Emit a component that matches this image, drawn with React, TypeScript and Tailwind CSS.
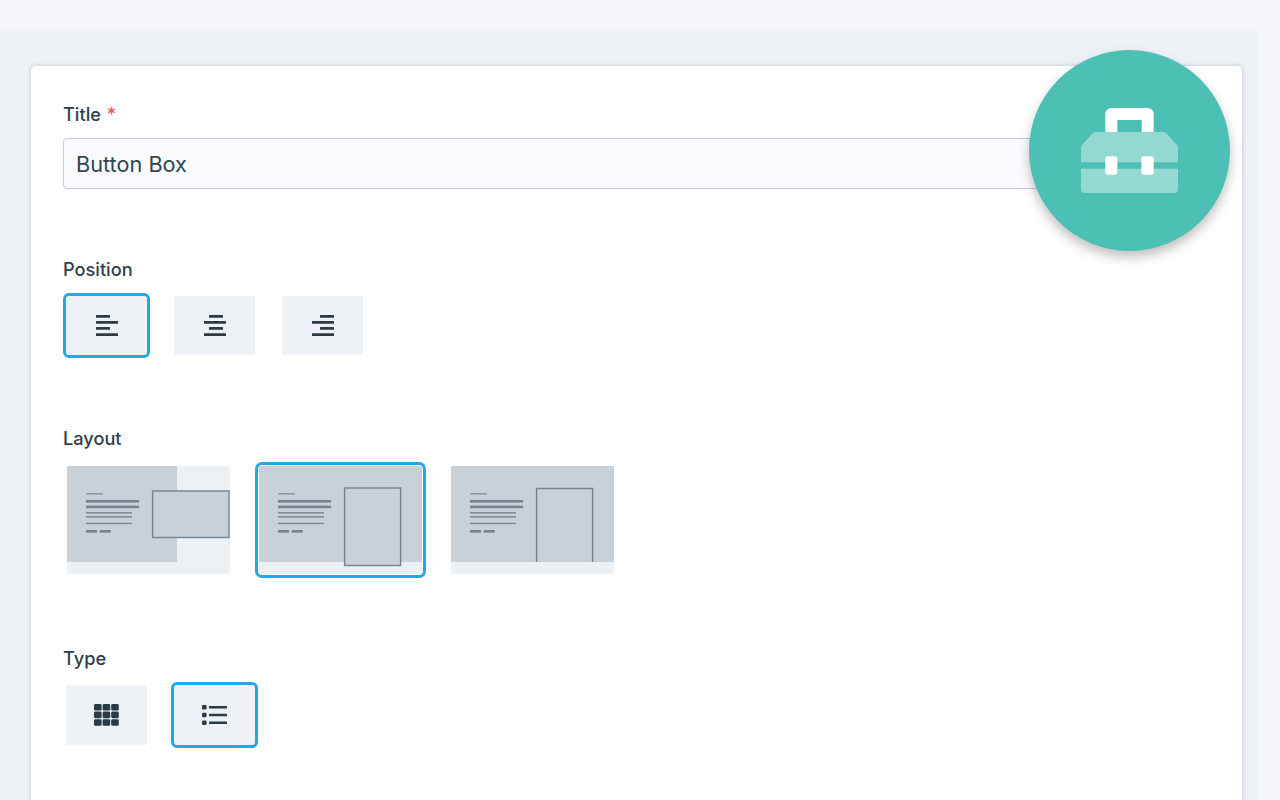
import React from 'react';

const sectionLabel = 'h-6 text-[18.2px] leading-6 font-medium text-[#2f3e4a]';
const optionBase = 'flex items-center justify-center bg-[#eef1f6] w-[81px] h-[59px]';
const optionActive = 'rounded-[3px] outline-[3px] outline-[#22a7ea]';

const Bars = ({ align }: { align: 'left' | 'center' | 'right' }) => {
  const short = align === 'left' ? 0 : align === 'center' ? 5 : 8;
  return (
    <svg width="22" height="21" viewBox="0 0 22 21" fill="#2a3b47">
      <rect x={short} y="0" width="14" height="2.8" rx="0.6" />
      <rect x="0" y="6" width="22" height="2.8" rx="0.6" />
      <rect x={short} y="12" width="14" height="2.8" rx="0.6" />
      <rect x="0" y="18.2" width="22" height="2.8" rx="0.6" />
    </svg>
  );
};

const GridIcon = () => (
  <svg width="25" height="22" viewBox="0 0 25 22" fill="#2a3b47">
    {[0, 8.6, 17.2].map((x) =>
      [0, 7.6, 15.2].map((y) => <rect key={`${x}-${y}`} x={x} y={y} width="7.6" height="6.6" rx="1.4" />)
    )}
  </svg>
);

const ListIcon = () => (
  <svg width="25" height="20" viewBox="0 0 25 20" fill="#2a3b47">
    {[0, 7.8, 15.6].map((y) => (
      <g key={y}>
        <rect x="0" y={y} width="4.6" height="4.4" rx="1.2" />
        <rect x="7" y={y + 0.9} width="18" height="2.6" rx="0.6" />
      </g>
    ))}
  </svg>
);

const ToolboxIcon = () => (
  <svg width="97" height="85" viewBox="0 0 97 85">
    <path fill="#ffffff" d="M24.3 26V6a6 6 0 0 1 6-6h36.4a6 6 0 0 1 6 6v20h-12V12H36.3v14z" />
    <path
      fill="#93d9d1"
      d="M0 39Q0 38 1 37L11.5 25.5Q13 24 15 24H82Q84 24 85.5 25.5L96 37Q97 38 97 39V54.3H0zM0 60.7H97V81a4 4 0 0 1-4 4H4a4 4 0 0 1-4-4z"
    />
    <rect x="24.3" y="48.3" width="12" height="18.4" rx="2.5" fill="#ffffff" />
    <rect x="60.3" y="48.3" width="12.4" height="18.4" rx="2.5" fill="#ffffff" />
  </svg>
);

// little page wireframes, kind picks where the picture sits
const LayoutThumb = ({ kind }: { kind: 'overlap' | 'tall' | 'bleed' }) => (
  <svg width="163" height="108" viewBox="0 0 163 108" className="block">
    <rect width="163" height="108" fill="#ecf1f6" />
    <rect width={kind === 'overlap' ? 110 : 163} height="96" fill="#c8d0d8" />
    <rect x="19" y="27" width="17" height="1.6" fill="#8a98a5" />
    <rect x="19" y="34" width="53" height="2.6" fill="#738391" />
    <rect x="19" y="39.6" width="53" height="2.6" fill="#738391" />
    <rect x="19" y="46" width="46" height="1.6" fill="#7d8c99" />
    <rect x="19" y="50" width="46" height="1.6" fill="#7d8c99" />
    <rect x="19" y="56.8" width="46" height="1.3" fill="#738391" />
    <rect x="19" y="64" width="11" height="2.6" fill="#738391" />
    <rect x="32.6" y="64" width="11" height="2.6" fill="#738391" />
    {kind === 'overlap' && (
      <rect x="85.6" y="25" width="76.4" height="46.5" fill="#c8d0d8" stroke="#738391" strokeWidth="1.4" />
    )}
    {kind === 'tall' && (
      <rect x="85.6" y="22" width="56" height="77.5" fill="#c8d0d8" stroke="#738391" strokeWidth="1.4" />
    )}
    {kind === 'bleed' && <path d="M85.6 96V22.5H141.6V96" fill="#c8d0d8" stroke="#738391" strokeWidth="1.4" />}
  </svg>
);

export default function App() {
  return (
    <div className="h-[800px] overflow-hidden bg-[#f3f5f9] pt-[30px] font-['Inter',sans-serif]">
      <div className="mr-[22px] h-[770px] bg-[#eef1f6] pl-[31px] pr-[16px] pt-[36px]">
        <div className="relative min-h-[800px] rounded-[5px] bg-white px-[32px] pt-[35px] shadow-[0_0_4px_rgba(120,135,165,0.45)]">
          {/* Title */}
          <div className={`pt-[1px] ${sectionLabel}`}>
            Title <span className="ml-[1px] text-[#ef5753]">*</span>
          </div>
          <div className="mt-[13px] flex h-[51px] items-center rounded-[4px] border-[1.5px] border-[#c5ccd8] bg-[#fafbfe] px-[12px] pt-[1px] text-[21.7px] text-[#33444f]">
            Button Box
          </div>

          {/* Position */}
          <div className={`mt-[68px] ${sectionLabel}`}>Position</div>
          <div className="mt-[15px] flex gap-[27px] pl-[3px]">
            <div className={`${optionBase} ${optionActive}`}>
              <Bars align="left" />
            </div>
            <div className={optionBase}>
              <Bars align="center" />
            </div>
            <div className={optionBase}>
              <Bars align="right" />
            </div>
          </div>

          {/* Layout */}
          <div className={`mt-[71px] ${sectionLabel}`}>Layout</div>
          <div className="mt-[16px] flex gap-[29px] pl-[4px]">
            <LayoutThumb kind="overlap" />
            <div className="rounded-[3px] outline-[3px] outline-offset-[1px] outline-[#22a7ea]">
              <LayoutThumb kind="tall" />
            </div>
            <LayoutThumb kind="bleed" />
          </div>

          {/* Type */}
          <div className={`mt-[72px] ${sectionLabel}`}>Type</div>
          <div className="mt-[15px] flex gap-[24px] pl-[3px]">
            <div className="flex h-[60px] w-[81px] items-center justify-center bg-[#eef1f6]">
              <GridIcon />
            </div>
            <div className={`ml-[3px] ${optionBase} h-[60px] ${optionActive}`}>
              <ListIcon />
            </div>
          </div>

          {/* Badge */}
          <div className="absolute right-[12px] top-[-16px] flex h-[201px] w-[201px] items-center justify-center rounded-full bg-[#4dc0b5] shadow-[0_6px_12px_rgba(0,0,0,0.25)]">
            <ToolboxIcon />
          </div>
        </div>
      </div>
    </div>
  );
}
